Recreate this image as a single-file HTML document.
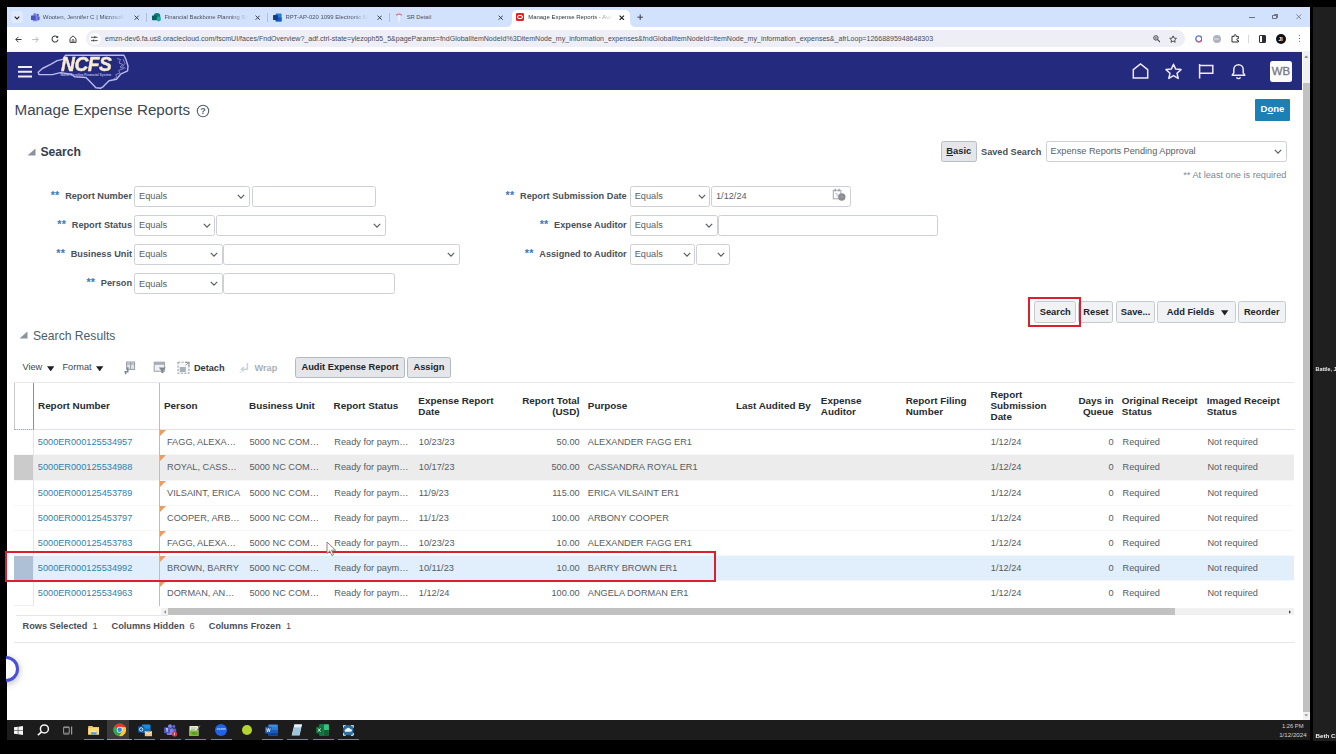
<!DOCTYPE html>
<html><head><meta charset="utf-8"><title>Manage Expense Reports</title>
<style>
*{box-sizing:border-box;margin:0;padding:0}
html,body{width:1336px;height:754px;overflow:hidden;background:#000;font-family:"Liberation Sans",sans-serif;}
.a{position:absolute}
.t{white-space:nowrap}
u{text-decoration-thickness:.8px;text-underline-offset:1px}
</style></head><body><div id="root" class="a" style="left:0;top:0;width:1336px;height:754px;filter:blur(.45px)">
<!-- window base -->
<div class="a" style="left:6.5px;top:6.6px;width:1303.4px;height:713.2px;background:#fff"></div>
<!-- right dark panel -->
<div class="a" style="left:1312.8px;top:6.6px;width:23.2px;height:734.2px;background:#1f1f1f"></div>
<!-- tab strip -->
<div class="a" style="left:6.5px;top:6.6px;width:1303.4px;height:20.6px;background:#d3e2fc"></div>
<!-- active tab -->
<div class="a" style="left:512px;top:9.5px;width:118px;height:18px;background:#fff;border-radius:5px 5px 0 0"></div>
<!-- address bar -->
<div class="a" style="left:86px;top:30.2px;width:1098.6px;height:17px;border-radius:8.5px;background:#eeeff6"></div>
<!-- orange line -->
<div class="a" style="left:6.5px;top:49.6px;width:1295.8px;height:3px;background:linear-gradient(#fff,#fbe3c6)"></div>
<!-- navy header -->
<div class="a" style="left:6.5px;top:52.2px;width:1295.8px;height:37.8px;background:#242a7d"></div>
<!-- vertical scrollbar -->
<div class="a" style="left:1302.5px;top:50.6px;width:7.4px;height:669.2px;background:#f1f1f1"></div>
<div class="a" style="left:1302.5px;top:82.5px;width:7.4px;height:629px;background:#c1c1c1"></div>
<!-- taskbar -->
<div class="a" style="left:6.5px;top:719.7px;width:1303.4px;height:20.3px;background:#1c1c1c"></div>
<!-- tab search chevron -->
<div class="a" style="left:10.7px;top:10.8px;width:12.4px;height:12.6px;border-radius:3.5px;background:#e1eafd"></div>
<svg class="a" style="left:13.8px;top:15.6px" width="6" height="4" viewBox="0 0 6 4"><path d="M0.7 0.7L3 3l2.3-2.3" fill="none" stroke="#1f1f1f" stroke-width="1.1"/></svg>
<!-- tab1 teams -->
<svg class="a" style="left:31px;top:13px" width="9" height="9" viewBox="0 0 9 9"><circle cx="6.6" cy="2.1" r="1.3" fill="#5b5fc7"/><circle cx="3.8" cy="1.7" r="1.6" fill="#7b83eb"/><rect x="4.6" y="3.3" width="4" height="4" rx="1" fill="#5b5fc7"/><rect x="1.6" y="3.3" width="5" height="5" rx="1" fill="#7b83eb"/><rect x="0" y="2.5" width="4.6" height="4.6" rx=".6" fill="#4b53bc"/></svg>
<div class="a t" style="left:42.8px;top:12px;height:11px;line-height:11px;width:82px;overflow:hidden;font-size:6.05px;color:#4a5060;-webkit-mask-image:linear-gradient(90deg,#000 80%,transparent)">Wooten, Jennifer C | Microsoft</div>
<!-- tab2 sharepoint -->
<svg class="a" style="left:151.6px;top:13px" width="9.4" height="9" viewBox="0 0 9.4 9"><circle cx="5" cy="3.4" r="3.3" fill="#0b7d74"/><circle cx="6.6" cy="6" r="2.4" fill="#1fa89b"/><rect x="0" y="2.4" width="4.8" height="4.8" rx=".6" fill="#03635c"/></svg>
<div class="a t" style="left:164.5px;top:12px;height:11px;line-height:11px;width:83px;overflow:hidden;font-size:5.85px;color:#4a5060;-webkit-mask-image:linear-gradient(90deg,#000 80%,transparent)">Financial Backbone Planning Sr</div>
<!-- tab3 word -->
<svg class="a" style="left:273.2px;top:13px" width="8.6" height="9" viewBox="0 0 8.6 9"><rect x="2.6" y="0.6" width="6" height="7.8" rx=".7" fill="#2b7cd3"/><rect x="2.6" y="4.4" width="6" height="4" fill="#185abd"/><rect x="0" y="2" width="5" height="5" rx=".6" fill="#103f91"/></svg>
<div class="a t" style="left:285.6px;top:12px;height:11px;line-height:11px;width:82.6px;overflow:hidden;font-size:5.93px;color:#4a5060;-webkit-mask-image:linear-gradient(90deg,#000 80%,transparent)">RPT-AP-020 1099 Electronic M</div>
<!-- tab4 icon -->
<svg class="a" style="left:394.6px;top:12.6px" width="8" height="10" viewBox="0 0 8 10"><path d="M1 2.2Q4 0 7 2.2" fill="none" stroke="#e2737b" stroke-width="1.1"/><path d="M4 2.2V7.6" stroke="#f2f5fb" stroke-width="1.6"/><circle cx="4" cy="8.6" r=".8" fill="#eef1f8"/></svg>
<div class="a t" style="left:406.7px;top:12px;height:11px;line-height:11px;font-size:5.8px;color:#4a5060">SR Detail</div>
<!-- separators -->
<div class="a" style="left:146.2px;top:13px;width:.8px;height:9px;background:#b3c0d9"></div>
<div class="a" style="left:266.8px;top:13px;width:.8px;height:9px;background:#b3c0d9"></div>
<div class="a" style="left:388.6px;top:13px;width:.8px;height:9px;background:#b3c0d9"></div>
<!-- closes -->
<svg class="a" style="left:134.2px;top:14.8px" width="5.4" height="5.4" viewBox="0 0 5.4 5.4"><path d="M.6 .6l4.2 4.2M4.8 .6L.6 4.8" stroke="#3a3f49" stroke-width="1"/></svg>
<svg class="a" style="left:255.1px;top:14.8px" width="5.4" height="5.4" viewBox="0 0 5.4 5.4"><path d="M.6 .6l4.2 4.2M4.8 .6L.6 4.8" stroke="#3a3f49" stroke-width="1"/></svg>
<svg class="a" style="left:376.7px;top:14.8px" width="5.4" height="5.4" viewBox="0 0 5.4 5.4"><path d="M.6 .6l4.2 4.2M4.8 .6L.6 4.8" stroke="#3a3f49" stroke-width="1"/></svg>
<svg class="a" style="left:498px;top:14.8px" width="5.4" height="5.4" viewBox="0 0 5.4 5.4"><path d="M.6 .6l4.2 4.2M4.8 .6L.6 4.8" stroke="#3a3f49" stroke-width="1"/></svg>
<!-- active tab curves -->
<svg class="a" style="left:506px;top:21.2px" width="6" height="6" viewBox="0 0 6 6"><path d="M6 0V6H0Q6 6 6 0Z" fill="#fff"/></svg>
<svg class="a" style="left:630px;top:21.2px" width="6" height="6" viewBox="0 0 6 6"><path d="M0 0V6H6Q0 6 0 0Z" fill="#fff"/></svg>
<!-- active tab content -->
<div class="a" style="left:516px;top:13.3px;width:7.8px;height:7.8px;border-radius:1.2px;background:#e0262c"></div>
<div class="a" style="left:517px;top:15px;width:5.8px;height:4.4px;border-radius:2.2px;border:1px solid #fff"></div>
<div class="a t" style="left:528.2px;top:12px;height:11px;line-height:11px;width:85px;overflow:hidden;font-size:5.98px;color:#30343c;-webkit-mask-image:linear-gradient(90deg,#000 78%,transparent)">Manage Expense Reports - Aud</div>
<svg class="a" style="left:619px;top:14.7px" width="5.6" height="5.6" viewBox="0 0 5.6 5.6"><path d="M.6 .6l4.4 4.4M5 .6L.6 5" stroke="#1c1e22" stroke-width="1.1"/></svg>
<svg class="a" style="left:637px;top:14.2px" width="6.4" height="6.4" viewBox="0 0 6.4 6.4"><path d="M3.2 .4v5.6M.4 3.2h5.6" stroke="#3a4150" stroke-width="1"/></svg>
<!-- window controls -->
<div class="a" style="left:1249.2px;top:16.6px;width:5.6px;height:.9px;background:#6b7282"></div>
<div class="a" style="left:1272.4px;top:15px;width:4.2px;height:4.2px;border:.8px solid #6b7282;border-radius:.8px"></div>
<div class="a" style="left:1273.6px;top:14px;width:4.2px;height:4.2px;border:.8px solid #6b7282;border-left:0;border-bottom:0;border-radius:.8px"></div>
<svg class="a" style="left:1296px;top:14.3px" width="5.6" height="5.6" viewBox="0 0 5.6 5.6"><path d="M.4 .4l4.8 4.8M5.2 .4L.4 5.2" stroke="#6b7282" stroke-width=".8"/></svg>
<!-- nav buttons -->
<svg class="a" style="left:15px;top:35.6px" width="7" height="7" viewBox="0 0 7 7"><path d="M6.6 3.5H1M3.4 .8L.8 3.5l2.6 2.7" fill="none" stroke="#3c4043" stroke-width="1"/></svg>
<svg class="a" style="left:32.4px;top:35.6px" width="7" height="7" viewBox="0 0 7 7"><path d="M.4 3.5H6M3.6 .8l2.6 2.7-2.6 2.7" fill="none" stroke="#b7bbc2" stroke-width="1"/></svg>
<svg class="a" style="left:50.8px;top:35px" width="8" height="8" viewBox="0 0 8 8"><path d="M6.6 2.4A3 3 0 1 0 7 4.6" fill="none" stroke="#3c4043" stroke-width="1.05"/><path d="M7.2 .6v2.4H4.8z" fill="#3c4043"/></svg>
<svg class="a" style="left:68.8px;top:35px" width="8" height="8" viewBox="0 0 8 8"><path d="M1 3.6L4 .9l3 2.7V7.4H1z" fill="none" stroke="#3c4043" stroke-width="1"/><path d="M3.2 7.4V5.2a.8 .8 0 0 1 1.6 0v2.2" fill="none" stroke="#3c4043" stroke-width=".8"/></svg>
<!-- tune icon -->
<div class="a" style="left:88.6px;top:32.6px;width:12.2px;height:12.2px;border-radius:50%;background:#fbfbfe"></div>
<svg class="a" style="left:91.4px;top:36.2px" width="6.6" height="6" viewBox="0 0 6.6 6"><path d="M0 1.3h3M4.8 1.3h1.8M0 4.6h1.6M3.6 4.6h3" stroke="#3c4043" stroke-width=".9"/><circle cx="3.9" cy="1.3" r="1" fill="#3c4043"/><circle cx="2.6" cy="4.6" r="1" fill="#3c4043"/></svg>
<div class="a t" style="left:105px;top:33.4px;height:11px;line-height:11px;font-size:7.06px;color:#474c55">emzn-dev6.fa.us8.oraclecloud.com/fscmUI/faces/FndOverview?_adf.ctrl-state=ylezoph55_5&amp;pageParams=fndGlobalItemNodeId%3DitemNode_my_information_expenses&amp;fndGlobalItemNodeId=itemNode_my_information_expenses&amp;_afrLoop=12668895948648303</div>
<!-- omnibox right icons -->
<svg class="a" style="left:1152.8px;top:35.2px" width="7.6" height="7.6" viewBox="0 0 7.6 7.6"><circle cx="2.9" cy="2.9" r="2.2" fill="none" stroke="#3c4043" stroke-width="1"/><path d="M4.6 4.6l2.6 2.6" stroke="#3c4043" stroke-width="1.1"/><path d="M1.9 2.9h2M2.9 1.9v2" stroke="#3c4043" stroke-width=".6"/></svg>
<svg class="a" style="left:1168.8px;top:34.8px" width="8.2" height="8" viewBox="0 0 8.2 8"><path d="M4.1 .9l1 2.2 2.4 .25-1.8 1.6 .5 2.35L4.1 6.1 2 7.3l.5-2.35L.7 3.35l2.4-.25z" fill="none" stroke="#3c4043" stroke-width=".9" stroke-linejoin="round"/></svg>
<!-- extensions -->
<svg class="a" style="left:1194.6px;top:35px" width="7.6" height="7.6" viewBox="0 0 7.6 7.6"><circle cx="3.8" cy="3.8" r="3" fill="#fff" stroke="#5a6ee6" stroke-width="1.3"/><path d="M1.6 5.9A3 3 0 0 0 6.2 5.6" fill="none" stroke="#e85a6b" stroke-width="1.3"/></svg>
<div class="a" style="left:1212.6px;top:34.6px;width:8.4px;height:8.4px;border-radius:50%;background:#b0b3bd"></div>
<div class="a" style="left:1214.4px;top:38.2px;width:4.8px;height:1.4px;background:#c9cbd3"></div>
<svg class="a" style="left:1231px;top:34.4px" width="8.6" height="8.8" viewBox="0 0 8.6 8.8"><path d="M1 2.4h2.2V1.6a1 1 0 0 1 2 0v.8h2.2v2.2h-.6a1 1 0 0 0 0 2h.6V8H1z" fill="none" stroke="#2b2e33" stroke-width="1" stroke-linejoin="round"/></svg>
<div class="a" style="left:1248px;top:34.6px;width:.8px;height:8.6px;background:#d6d9e0"></div>
<div class="a" style="left:1258.6px;top:35.2px;width:7.8px;height:7.4px;border:1px solid #2b2e33;border-radius:1px;background:linear-gradient(90deg,#fff 50%,#2b2e33 50%)"></div>
<div class="a t" style="left:1275.6px;top:33.8px;width:10.2px;height:10.2px;border-radius:50%;background:#101116;color:#fff;font-size:5px;font-weight:700;text-align:center;line-height:10.2px">JI</div>
<div class="a" style="left:1298.6px;top:35.2px;width:1.3px;height:1.3px;background:#3c4043;border-radius:50%;box-shadow:0 2.9px 0 #3c4043,0 5.8px 0 #3c4043"></div>
<!-- scroll arrows -->
<svg class="a" style="left:1304px;top:54.6px" width="4.4" height="3" viewBox="0 0 4.4 3"><path d="M.2 2.8L2.2 .4l2 2.4z" fill="#7a7a7a"/></svg>
<svg class="a" style="left:1304px;top:714px" width="4.4" height="3" viewBox="0 0 4.4 3"><path d="M.2 .2L2.2 2.6l2-2.4z" fill="#9a9a9a"/></svg>
<!-- navy header content -->
<div class="a" style="left:17.8px;top:65.9px;width:14.2px;height:1.9px;background:#f0eef4;box-shadow:0 4.75px 0 #f0eef4,0 9.5px 0 #f0eef4"></div>
<svg class="a" style="left:37px;top:54px" width="93" height="36" viewBox="0 0 93 36"><path d="M1.200 18.200 L5.400 14.500 L13.600 10.400 L20.200 6.600 L25.900 5.400 L28.400 1.300 L86.900 1.300 L88.900 5.400 L91 12 L90.600 16.900 L83.600 20.200 L79.500 25.200 L72 26.800 L66.300 32.600 L63.800 34.200 L58.900 33.800 L53.900 28.500 L49 23.500 L37.500 22.700 L34.200 20.200 L23.500 18.600 L15.200 20.600 L2 20.600 Z" fill="none" stroke="#bcb9ee" stroke-width="1.400" stroke-linejoin="round"/><path d="M80 4.500l3.500 1-1.500 3.500 4 1.500-3 2.500 3.500 1.500-5 2 1.500 2.500-4 1.500 .5 3-3 1.500M86 5l2 4.500-2.500 3 3 2" fill="none" stroke="#9c99d8" stroke-width=".8"/></svg>
<div class="a t" style="left:60.500px;top:72.600px;height:4px;line-height:4px;font-size:3.300px;font-weight:700;color:#b9b7ec;letter-spacing:0">North Carolina Financial System</div>
<div class="a t" style="left:61.400px;top:53.200px;height:22px;line-height:22px;font-size:21px;font-weight:700;font-style:italic;color:#f7ecd9;letter-spacing:-.5px;-webkit-text-stroke:.45px #f7ecd9;text-shadow:1px 1px 0 #2e2a55;transform:scaleX(.915);transform-origin:0 0">NCFS</div>
<!-- header icons -->
<svg class="a" style="left:1130.5px;top:62px" width="19" height="18" viewBox="0 0 19 18"><path d="M2.3 16.1V7.6L9.5 1.9l7.2 5.7v8.5z" fill="none" stroke="#eeeaf2" stroke-width="1.5" stroke-linejoin="miter"/></svg>
<svg class="a" style="left:1163.5px;top:62px" width="19" height="18" viewBox="0 0 19 18"><path d="M9.5 2.2l2.2 4.9 5.3 .5-4 3.6 1.2 5.2-4.7-2.8-4.7 2.8 1.2-5.2-4-3.6 5.3-.5z" fill="none" stroke="#eeeaf2" stroke-width="1.5" stroke-linejoin="round"/></svg>
<svg class="a" style="left:1196.5px;top:62px" width="19" height="18" viewBox="0 0 19 18"><path d="M2.6 2v14.6M2.6 3.4h13.2v7.8H2.6" fill="none" stroke="#eeeaf2" stroke-width="1.5"/></svg>
<svg class="a" style="left:1229px;top:62px" width="19" height="18" viewBox="0 0 19 18"><path d="M3.2 13.2h12.6l-1.6-2.4V7.4a4.7 4.7 0 0 0-9.4 0v3.4z" fill="none" stroke="#eeeaf2" stroke-width="1.5" stroke-linejoin="round"/><path d="M7.6 15.2a2 2 0 0 0 3.8 0" fill="none" stroke="#eeeaf2" stroke-width="1.4"/></svg>
<div class="a t" style="left:1270px;top:60.5px;width:22px;height:21.5px;border-radius:2.5px;background:#fcfcfc;color:#77777c;font-size:11.4px;-webkit-text-stroke:.3px #77777c;text-align:center;line-height:21.5px">WB</div>
<!-- taskbar -->
<div class="a" style="left:107px;top:719.7px;width:22.4px;height:20.3px;background:#3b3b3b"></div>
<svg class="a" style="left:14.2px;top:726px" width="9" height="9" viewBox="0 0 9 9"><path d="M0 1.3l3.8-.55v3.5H0zM4.3 .7L9 0v4.25H4.3zM0 4.75h3.8v3.5L0 7.7zM4.3 4.75H9V9l-4.7-.7z" fill="#f4f4f4"/></svg>
<svg class="a" style="left:36.8px;top:724.4px" width="13" height="12" viewBox="0 0 13 12"><circle cx="7.4" cy="4.9" r="4" fill="none" stroke="#f4f4f4" stroke-width="1.5"/><path d="M4.6 7.9L.9 11.2" stroke="#f4f4f4" stroke-width="1.7"/></svg>
<svg class="a" style="left:62.6px;top:726px" width="10" height="9" viewBox="0 0 10 9"><rect x=".6" y="1.6" width="5.6" height="5.6" fill="none" stroke="#9a9a9a" stroke-width="1"/><path d="M.6 .4h5.6M.6 8.6h5.6" stroke="#8a8a8a" stroke-width=".7"/><path d="M8.6 .4v8.2" stroke="#9a9a9a" stroke-width="1.2"/></svg>
<!-- explorer -->
<svg class="a" style="left:88px;top:725.4px" width="11.4" height="10" viewBox="0 0 11.4 10"><path d="M.2 1h4l1 1h6v7.6H.2z" fill="#f5c84a"/><rect x=".2" y="3" width="11" height="6.6" fill="#fbdc73"/><rect x="3" y="6" width="5.6" height="3.6" fill="#5b9bd5"/><rect x="3" y="6" width="5.6" height="1.2" fill="#e9e9d8"/></svg>
<!-- chrome -->
<svg class="a" style="left:112.6px;top:723.4px" width="13.4" height="13.4" viewBox="0 0 13.4 13.4"><circle cx="6.7" cy="6.7" r="6.4" fill="#e33b2e"/><path d="M6.7 6.7L1.2 3.5A6.4 6.4 0 0 0 6.1 13.1L9.4 8.3z" fill="#2da94f"/><path d="M6.7 6.7l2.8 1.6-3.4 4.8A6.4 6.4 0 0 0 12.5 3.9H7.2z" fill="#fcc934"/><circle cx="6.7" cy="6.7" r="3" fill="#f4f4f4"/><circle cx="6.7" cy="6.7" r="2.3" fill="#3f7fe6"/></svg>
<!-- outlook -->
<svg class="a" style="left:138px;top:724.4px" width="14.4" height="12.4" viewBox="0 0 14.4 12.4"><rect x="4" y=".4" width="8.4" height="8.6" rx=".8" fill="#1a8fe0"/><rect x="4" y="4.6" width="8.4" height="4.4" fill="#0f6cbd"/><rect x="0" y="2.2" width="6.4" height="6.4" rx=".8" fill="#0a5aa6"/><circle cx="3.2" cy="5.4" r="1.7" fill="none" stroke="#e8f1fa" stroke-width=".9"/><rect x="6.8" y="7.4" width="7.4" height="4.8" fill="#f0c58a"/><path d="M6.8 7.4l3.7 2.6 3.7-2.6" fill="none" stroke="#fff3dc" stroke-width=".8"/></svg>
<!-- teams -->
<svg class="a" style="left:163.6px;top:724px" width="14" height="13" viewBox="0 0 14 13"><circle cx="9.8" cy="2.4" r="1.6" fill="#5b5fc7"/><circle cx="6" cy="2.2" r="2" fill="#7b83eb"/><rect x="6.6" y="4.4" width="5.6" height="5.4" rx="1.2" fill="#5b5fc7"/><rect x="2.6" y="4.4" width="6.8" height="6.6" rx="1.2" fill="#7b83eb"/><rect x="0" y="3.2" width="6" height="6" rx=".7" fill="#4b53bc"/><path d="M1.8 4.8h2.4M3 4.8v3.2" stroke="#fff" stroke-width=".8"/><circle cx="10.6" cy="10" r="2.6" fill="#d9303f"/><rect x="10.2" y="8.6" width=".8" height="2.8" fill="#fbd9dc"/></svg>
<!-- notepad++ -->
<svg class="a" style="left:189px;top:724.6px" width="11.6" height="11.6" viewBox="0 0 11.6 11.6"><rect x=".4" y="1" width="9" height="10.2" rx=".8" fill="#e9f0d4"/><rect x=".4" y="5.4" width="9" height="5.8" fill="#7fb839"/><path d="M2 3h5.4M2 4.6h4" stroke="#9aa68a" stroke-width=".7"/><path d="M1.8 7h5.6l1 2.8H3.4z" fill="#5c9a28"/><path d="M11 .6L8 5.4" stroke="#8a7a46" stroke-width="1"/></svg>
<!-- zoom -->
<div class="a" style="left:214.8px;top:723.7px;width:12.7px;height:12.7px;border-radius:50%;background:#1e63ea"></div>
<div class="a t" style="left:214.8px;top:727.4px;width:12.7px;text-align:center;font-size:3.6px;line-height:5px;font-weight:700;color:#bcd2fb">zoom</div>
<!-- green circle -->
<div class="a" style="left:241.5px;top:724.9px;width:10.4px;height:10.4px;border-radius:50%;background:#b5d42f"></div>
<!-- word -->
<svg class="a" style="left:265.4px;top:724.4px" width="13" height="12" viewBox="0 0 13 12"><rect x="3.4" y=".4" width="9.4" height="11.2" rx=".9" fill="#3a8fe2"/><rect x="3.4" y="3.2" width="9.4" height="2.8" fill="#2b7cd3"/><rect x="3.4" y="6" width="9.4" height="2.8" fill="#185abd"/><rect x="3.4" y="8.8" width="9.4" height="2.8" fill="#103f91"/><rect x="0" y="2.8" width="6.6" height="6.6" rx=".8" fill="#1a5dbe"/><path d="M1.6 4.4l.9 3.4 .9-3.4 .9 3.4 .9-3.4" fill="none" stroke="#fff" stroke-width=".7"/></svg>
<!-- notepad -->
<svg class="a" style="left:291.4px;top:724.4px" width="11.6" height="12" viewBox="0 0 11.6 12"><path d="M3.4 .6h7.6L8.6 11.4H.6z" fill="#d8e6ee"/><path d="M3 3.4h7L8.4 11H1z" fill="#9cc5da"/><path d="M3.4 .6h7.6l-.4 1.6H3z" fill="#f2f5f7"/></svg>
<!-- excel -->
<svg class="a" style="left:316.4px;top:724.4px" width="13" height="12" viewBox="0 0 13 12"><rect x="3.4" y=".4" width="9.4" height="11.2" rx=".9" fill="#21a366"/><rect x="3.4" y=".4" width="4.7" height="5.6" fill="#107c41"/><rect x="8.1" y="6" width="4.7" height="5.6" fill="#185c37"/><rect x="3.4" y="6" width="4.7" height="5.6" fill="#107c41"/><rect x="8.1" y=".4" width="4.7" height="5.6" fill="#33c481"/><rect x="0" y="2.8" width="6.6" height="6.6" rx=".8" fill="#0e6e3a"/><path d="M2 4.4l2.6 3.4M4.6 4.4L2 7.8" stroke="#fff" stroke-width=".8"/></svg>
<!-- snip -->
<svg class="a" style="left:343.4px;top:725px" width="10.6" height="10.6" viewBox="0 0 10.6 10.6"><rect x=".3" y=".3" width="10" height="10" rx="1" fill="#2a6fa3"/><path d="M.3 2.6V.3h2.3M8 .3h2.3v2.3M10.300 8v2.3H8M2.600 10.300H.3V8" fill="none" stroke="#eef5fa" stroke-width="1"/><path d="M2.400 6.800a1.400 1.400 0 0 1 .7-2.600 2.100 2.100 0 0 1 4-.1 1.400 1.400 0 0 1 .9 2.700z" fill="#f3f8fb"/></svg>
<!-- underlines -->
<div class="a" style="left:84px;top:739px;width:20.4px;height:1.3px;background:#6f8796"></div>
<div class="a" style="left:107px;top:739px;width:24.6px;height:1.3px;background:#8ea5b4"></div>
<div class="a" style="left:134.4px;top:739px;width:20.8px;height:1.3px;background:#6f8796"></div>
<div class="a" style="left:160px;top:739px;width:21px;height:1.3px;background:#6f8796"></div>
<div class="a" style="left:185.4px;top:739px;width:21px;height:1.3px;background:#6f8796"></div>
<div class="a" style="left:211px;top:739px;width:21px;height:1.3px;background:#6f8796"></div>
<div class="a" style="left:261.8px;top:739px;width:21px;height:1.3px;background:#6f8796"></div>
<div class="a" style="left:287px;top:739px;width:21px;height:1.3px;background:#6f8796"></div>
<div class="a" style="left:312.6px;top:739px;width:21px;height:1.3px;background:#6f8796"></div>
<div class="a" style="left:338.2px;top:739px;width:21px;height:1.3px;background:#6f8796"></div>
<!-- clock -->
<div class="a t" style="right:32.5px;top:721.6px;height:8px;line-height:8px;font-size:5.8px;color:#d2d2d2">1:26 PM</div>
<div class="a t" style="right:29.3px;top:731px;height:8px;line-height:8px;font-size:6.2px;color:#d2d2d2">1/12/2024</div>
<!-- right panel labels -->
<div class="a t" style="left:1315.5px;top:364.5px;height:8px;line-height:8px;font-size:5.4px;font-weight:700;color:#e9e9e9">Battle, J</div>
<div class="a t" style="left:1315.5px;top:732.4px;height:8px;line-height:8px;font-size:6.2px;font-weight:700;color:#f1f1f1">Beth Cr</div>

<div class="a t" style="left:14.5px;top:102.5px;height:14px;line-height:14px;font-size:15.2px;font-weight:400;color:#3c4856;">Manage Expense Reports</div>
<svg class="a" style="left:196px;top:104px" width="14" height="14" viewBox="0 0 14 14"><circle cx="7" cy="7" r="5.7" fill="none" stroke="#55606c" stroke-width="1.1"/><text x="7" y="10.2" font-size="9" font-weight="700" text-anchor="middle" fill="#55606c" font-family="Liberation Sans">?</text></svg>
<div class="a" style="left:1254.5px;top:99.3px;width:35.9px;height:21.7px;background:#1a80b6;border-radius:1px;text-align:center;line-height:20px;font-size:9.5px;font-weight:700;color:#fff">D<u>o</u>ne</div>
<svg class="a" style="left:27px;top:147.5px" width="9" height="8" viewBox="0 0 9 8"><path d="M8.5 0.5 V7.5 H0.5 Z" fill="#8a939c"/></svg>
<div class="a t" style="left:40.4px;top:144.7px;height:14px;line-height:14px;font-size:12.2px;font-weight:700;color:#33414f;">Search</div>
<div class="a" style="left:941.0px;top:141.39999999999998px;width:35.5px;height:20.6px;border:1.2px solid #c6cace;border-radius:2.5px;background:#f1f2f4;text-align:center;line-height:19.0px;font-size:9.299999999999999px;font-weight:700;color:#20252b;white-space:nowrap;background:#e4e6e9;border-color:#b9bec4"><u>B</u>asic</div>
<div class="a t" style="left:981px;top:144.6px;height:14px;line-height:14px;font-size:9.2px;font-weight:700;color:#4a5159;">Saved Search</div>
<div class="a" style="left:1045.9px;top:141.0px;width:241.1px;height:21.4px;border:1.3px solid #cdd1d6;border-radius:2.5px;background:#fff"><div class="a t" style="left:3.7px;top:0;height:100%;line-height:19.8px;font-size:9.2px;color:#5a6168">Expense Reports Pending Approval</div><svg class="a" style="right:3.8px;top:50%;margin-top:-2.3px" width="8" height="5.4" viewBox="0 0 8 5.4"><path d="M0.800 0.900 L4 4.100 L7.200 0.900" fill="none" stroke="#5a6067" stroke-width="1.250"/></svg></div>
<div class="a t" style="right:49.59999999999991px;top:167.7px;height:14px;line-height:14px;font-size:9.2px;font-weight:400;color:#7b8792;">** At least one is required</div>
<div class="a t" style="right:1204.0px;top:189.2px;height:14px;line-height:14px;font-size:9.2px;font-weight:700;color:#4a5159;"><span style="color:#3d78b6;font-weight:700;font-size:10.8px;line-height:0;margin-right:5.6px;letter-spacing:.2px;position:relative;top:-.4px">**</span>Report Number</div>
<div class="a t" style="right:1204.0px;top:218.0px;height:14px;line-height:14px;font-size:9.2px;font-weight:700;color:#4a5159;"><span style="color:#3d78b6;font-weight:700;font-size:10.8px;line-height:0;margin-right:5.6px;letter-spacing:.2px;position:relative;top:-.4px">**</span>Report Status</div>
<div class="a t" style="right:1204.0px;top:247.3px;height:14px;line-height:14px;font-size:9.2px;font-weight:700;color:#4a5159;"><span style="color:#3d78b6;font-weight:700;font-size:10.8px;line-height:0;margin-right:5.6px;letter-spacing:.2px;position:relative;top:-.4px">**</span>Business Unit</div>
<div class="a t" style="right:1204.0px;top:276.4px;height:14px;line-height:14px;font-size:9.2px;font-weight:700;color:#4a5159;"><span style="color:#3d78b6;font-weight:700;font-size:10.8px;line-height:0;margin-right:5.6px;letter-spacing:.2px;position:relative;top:-.4px">**</span>Person</div>
<div class="a" style="left:134.39999999999998px;top:185.6px;width:115.8px;height:21.5px;border:1.3px solid #cdd1d6;border-radius:2.5px;background:#fff"><div class="a t" style="left:3.7px;top:0;height:100%;line-height:19.9px;font-size:9.2px;color:#5a6168">Equals</div><svg class="a" style="right:3.8px;top:50%;margin-top:-2.3px" width="8" height="5.4" viewBox="0 0 8 5.4"><path d="M0.800 0.900 L4 4.100 L7.200 0.900" fill="none" stroke="#5a6067" stroke-width="1.250"/></svg></div>
<div class="a" style="left:251.7px;top:185.6px;width:124.7px;height:21.5px;border:1.3px solid #cdd1d6;border-radius:2.5px;background:#fff"></div>
<div class="a" style="left:134.39999999999998px;top:214.6px;width:81.0px;height:21.4px;border:1.3px solid #cdd1d6;border-radius:2.5px;background:#fff"><div class="a t" style="left:3.7px;top:0;height:100%;line-height:19.8px;font-size:9.2px;color:#5a6168">Equals</div><svg class="a" style="right:3.8px;top:50%;margin-top:-2.3px" width="8" height="5.4" viewBox="0 0 8 5.4"><path d="M0.800 0.900 L4 4.100 L7.200 0.900" fill="none" stroke="#5a6067" stroke-width="1.250"/></svg></div>
<div class="a" style="left:216.0px;top:214.6px;width:170.2px;height:21.4px;border:1.3px solid #cdd1d6;border-radius:2.5px;background:#fff"><svg class="a" style="right:3.8px;top:50%;margin-top:-2.3px" width="8" height="5.4" viewBox="0 0 8 5.4"><path d="M0.800 0.900 L4 4.100 L7.200 0.900" fill="none" stroke="#5a6067" stroke-width="1.250"/></svg></div>
<div class="a" style="left:134.39999999999998px;top:243.6px;width:88.4px;height:21.5px;border:1.3px solid #cdd1d6;border-radius:2.5px;background:#fff"><div class="a t" style="left:3.7px;top:0;height:100%;line-height:19.9px;font-size:9.2px;color:#5a6168">Equals</div><svg class="a" style="right:3.8px;top:50%;margin-top:-2.3px" width="8" height="5.4" viewBox="0 0 8 5.4"><path d="M0.800 0.900 L4 4.100 L7.200 0.900" fill="none" stroke="#5a6067" stroke-width="1.250"/></svg></div>
<div class="a" style="left:223.39999999999998px;top:243.6px;width:236.5px;height:21.5px;border:1.3px solid #cdd1d6;border-radius:2.5px;background:#fff"><svg class="a" style="right:3.8px;top:50%;margin-top:-2.3px" width="8" height="5.4" viewBox="0 0 8 5.4"><path d="M0.800 0.900 L4 4.100 L7.200 0.900" fill="none" stroke="#5a6067" stroke-width="1.250"/></svg></div>
<div class="a" style="left:134.39999999999998px;top:272.8px;width:88.4px;height:21.6px;border:1.3px solid #cdd1d6;border-radius:2.5px;background:#fff"><div class="a t" style="left:3.7px;top:0;height:100%;line-height:20.0px;font-size:9.2px;color:#5a6168">Equals</div><svg class="a" style="right:3.8px;top:50%;margin-top:-2.3px" width="8" height="5.4" viewBox="0 0 8 5.4"><path d="M0.800 0.900 L4 4.100 L7.200 0.900" fill="none" stroke="#5a6067" stroke-width="1.250"/></svg></div>
<div class="a" style="left:223.39999999999998px;top:272.8px;width:171.8px;height:21.6px;border:1.3px solid #cdd1d6;border-radius:2.5px;background:#fff"></div>
<div class="a t" style="right:709.3000000000001px;top:189.2px;height:14px;line-height:14px;font-size:9.2px;font-weight:700;color:#4a5159;"><span style="color:#3d78b6;font-weight:700;font-size:10.8px;line-height:0;margin-right:5.6px;letter-spacing:.2px;position:relative;top:-.4px">**</span>Report Submission Date</div>
<div class="a t" style="right:709.3000000000001px;top:218.0px;height:14px;line-height:14px;font-size:9.2px;font-weight:700;color:#4a5159;"><span style="color:#3d78b6;font-weight:700;font-size:10.8px;line-height:0;margin-right:5.6px;letter-spacing:.2px;position:relative;top:-.4px">**</span>Expense Auditor</div>
<div class="a t" style="right:709.3000000000001px;top:247.3px;height:14px;line-height:14px;font-size:9.2px;font-weight:700;color:#4a5159;"><span style="color:#3d78b6;font-weight:700;font-size:10.8px;line-height:0;margin-right:5.6px;letter-spacing:.2px;position:relative;top:-.4px">**</span>Assigned to Auditor</div>
<div class="a" style="left:630.0px;top:185.6px;width:80.3px;height:21.5px;border:1.3px solid #cdd1d6;border-radius:2.5px;background:#fff"><div class="a t" style="left:3.7px;top:0;height:100%;line-height:19.9px;font-size:9.2px;color:#5a6168">Equals</div><svg class="a" style="right:3.8px;top:50%;margin-top:-2.3px" width="8" height="5.4" viewBox="0 0 8 5.4"><path d="M0.800 0.900 L4 4.100 L7.200 0.900" fill="none" stroke="#5a6067" stroke-width="1.250"/></svg></div>
<div class="a" style="left:711.3000000000001px;top:185.6px;width:139.3px;height:21.5px;border:1.3px solid #cdd1d6;border-radius:2.5px;background:#fff"><div class="a t" style="left:3.7px;top:0;height:100%;line-height:19.9px;font-size:9.2px;color:#5a6168">1/12/24</div></div>
<div class="a" style="left:630.0px;top:214.6px;width:87.6px;height:21.4px;border:1.3px solid #cdd1d6;border-radius:2.5px;background:#fff"><div class="a t" style="left:3.7px;top:0;height:100%;line-height:19.8px;font-size:9.2px;color:#5a6168">Equals</div><svg class="a" style="right:3.8px;top:50%;margin-top:-2.3px" width="8" height="5.4" viewBox="0 0 8 5.4"><path d="M0.800 0.900 L4 4.100 L7.200 0.900" fill="none" stroke="#5a6067" stroke-width="1.250"/></svg></div>
<div class="a" style="left:718.2px;top:214.6px;width:219.4px;height:21.4px;border:1.3px solid #cdd1d6;border-radius:2.5px;background:#fff"></div>
<div class="a" style="left:630.0px;top:243.6px;width:65.3px;height:21.5px;border:1.3px solid #cdd1d6;border-radius:2.5px;background:#fff"><div class="a t" style="left:3.7px;top:0;height:100%;line-height:19.9px;font-size:9.2px;color:#5a6168">Equals</div><svg class="a" style="right:3.8px;top:50%;margin-top:-2.3px" width="8" height="5.4" viewBox="0 0 8 5.4"><path d="M0.800 0.900 L4 4.100 L7.200 0.900" fill="none" stroke="#5a6067" stroke-width="1.250"/></svg></div>
<div class="a" style="left:696.3000000000001px;top:243.6px;width:33.8px;height:21.5px;border:1.3px solid #cdd1d6;border-radius:2.5px;background:#fff"><svg class="a" style="right:3.8px;top:50%;margin-top:-2.3px" width="8" height="5.4" viewBox="0 0 8 5.4"><path d="M0.800 0.900 L4 4.100 L7.200 0.900" fill="none" stroke="#5a6067" stroke-width="1.250"/></svg></div>
<svg class="a" style="left:831.500px;top:188px" width="15" height="14" viewBox="0 0 15 14"><rect x="1.300" y="2.400" width="7.600" height="8.400" fill="#fbfbfc" stroke="#a9aeb3" stroke-width="1.100"/><path d="M3.200 .8v2.600M7 .8v2.600" stroke="#9a9fa5" stroke-width="1.300"/><path d="M3.400 5.600h1.800v3.200" fill="none" stroke="#b9bdc2" stroke-width=".9"/><circle cx="9.800" cy="9" r="3.700" fill="#8a8d91"/><path d="M8.600 8.200l2.400 1.400" stroke="#a9acb0" stroke-width="1"/></svg>
<div class="a" style="left:1034.3999999999999px;top:301.2px;width:41.7px;height:21.6px;border:1.2px solid #c6cace;border-radius:2.5px;background:#f1f2f4;text-align:center;line-height:20.0px;font-size:9.299999999999999px;font-weight:700;color:#20252b;white-space:nowrap;">Search</div>
<div class="a" style="left:1078.3999999999999px;top:301.2px;width:35.1px;height:21.6px;border:1.2px solid #c6cace;border-radius:2.5px;background:#f1f2f4;text-align:center;line-height:20.0px;font-size:9.299999999999999px;font-weight:700;color:#20252b;white-space:nowrap;">Reset</div>
<div class="a" style="left:1115.6px;top:301.2px;width:39.9px;height:21.6px;border:1.2px solid #c6cace;border-radius:2.5px;background:#f1f2f4;text-align:center;line-height:20.0px;font-size:9.299999999999999px;font-weight:700;color:#20252b;white-space:nowrap;">Save...</div>
<div class="a" style="left:1157.3999999999999px;top:301.2px;width:78.3px;height:21.6px;border:1.2px solid #c6cace;border-radius:2.5px;background:#f1f2f4;text-align:center;line-height:20.0px;font-size:9.299999999999999px;font-weight:700;color:#20252b;white-space:nowrap;">&nbsp;Add Fields&nbsp;&nbsp;<svg style="margin-left:2px;position:relative;top:.4px" width="7.400" height="5.400" viewBox="0 0 7.400 5.400"><path d="M0 .2H7.400L3.700 5.400Z" fill="#1d2126"/></svg></div>
<div class="a" style="left:1237.6px;top:301.2px;width:48.3px;height:21.6px;border:1.2px solid #c6cace;border-radius:2.5px;background:#f1f2f4;text-align:center;line-height:20.0px;font-size:9.299999999999999px;font-weight:700;color:#20252b;white-space:nowrap;">Reorder</div>
<div class="a" style="left:1028.1px;top:296.8px;width:53.1px;height:30.4px;border:2.2px solid #dc1f2c"></div>
<svg class="a" style="left:18.8px;top:331.3px" width="9" height="8" viewBox="0 0 9 8"><path d="M8.5 0.5 V7.5 H0.5 Z" fill="#8a939c"/></svg>
<div class="a t" style="left:33px;top:328.7px;height:14px;line-height:14px;font-size:12.15px;font-weight:400;color:#4f5c69;">Search Results</div>
<div class="a t" style="left:22.5px;top:360.3px;height:14px;line-height:14px;font-size:9.2px;font-weight:400;color:#3a4552;">View<svg style="margin-left:4.6px;position:relative;top:.6px" width="7.4" height="5.4" viewBox="0 0 7.4 5.4"><path d="M0 .2H7.4L3.7 5.400Z" fill="#1d2126"/></svg></div>
<div class="a t" style="left:62.5px;top:360.3px;height:14px;line-height:14px;font-size:9.2px;font-weight:400;color:#3a4552;">Format<svg style="margin-left:4.6px;position:relative;top:.6px" width="7.4" height="5.4" viewBox="0 0 7.4 5.4"><path d="M0 .2H7.4L3.7 5.400Z" fill="#1d2126"/></svg></div>
<div class="a t" style="left:193.9px;top:360.8px;height:14px;line-height:14px;font-size:9.2px;font-weight:700;color:#2f3842;">Detach</div>
<div class="a t" style="left:254.5px;top:360.8px;height:14px;line-height:14px;font-size:9.2px;font-weight:700;color:#a9b0b7;">Wrap</div>
<div class="a" style="left:295.3px;top:356.7px;width:109.4px;height:21.3px;border:1.2px solid #c6cace;border-radius:2.5px;background:#f1f2f4;text-align:center;line-height:19.7px;font-size:9.299999999999999px;font-weight:700;color:#20252b;white-space:nowrap;background:#e4e6e9;border-color:#b4b9bf">Audit Expense Report</div>
<div class="a" style="left:406.8px;top:356.7px;width:44.3px;height:21.3px;border:1.2px solid #c6cace;border-radius:2.5px;background:#f1f2f4;text-align:center;line-height:19.7px;font-size:9.299999999999999px;font-weight:700;color:#20252b;white-space:nowrap;background:#e4e6e9;border-color:#b4b9bf">Assign</div>
<svg class="a" style="left:122.5px;top:360.5px" width="13" height="14" viewBox="0 0 13 14"><rect x="3.6" y="1" width="8" height="7.4" fill="#e3e6e9" stroke="#969da4" stroke-width="1"/><path d="M3.6 3h8M7.6 1v7.400" stroke="#969da4" stroke-width="1"/><path d="M4.800 6.200v4.600H1.400M2.600 10.800v2.400" fill="none" stroke="#7f878f" stroke-width="1.5"/></svg>
<svg class="a" style="left:152.600px;top:360.600px" width="14" height="14" viewBox="0 0 14 14"><rect x="1.200" y="1.200" width="10.400" height="9" fill="#eef0f2" stroke="#9aa1a8" stroke-width="1"/><rect x="1.200" y="1.200" width="10.400" height="2.600" fill="#a5acb3"/><path d="M5.800 6.600h7L10.400 9.400v3.200l-2.200-1.200V9.400z" fill="#7f878f"/></svg>
<svg class="a" style="left:176.800px;top:360.600px" width="13" height="13" viewBox="0 0 13 13"><rect x="1" y="1.200" width="11" height="11" fill="#f6f7f8" stroke="#9aa1a8" stroke-width="1.100" stroke-dasharray="2.200 1.300"/><rect x="2.800" y="6" width="6" height="5" fill="#a9b0b7"/><path d="M8.200 1.300h3.700v3.700M11.600 1.600L8.800 4.400" fill="none" stroke="#8b939b" stroke-width="1"/></svg>
<svg class="a" style="left:239px;top:361.600px" width="11" height="11" viewBox="0 0 11 11"><path d="M8.400 1v6.200H2.600M4.800 5L2.400 7.200l2.400 2.200" fill="none" stroke="#cdd2d7" stroke-width="1.500"/><path d="M.6 10.200h2.400" stroke="#d5d9dd" stroke-width="1"/></svg>
<div class="a" style="left:14.2px;top:382.4px;width:1280.1px;height:1.0px;background:#e6e8eb"></div>
<div class="a" style="left:14.2px;top:429.3px;width:1280.1px;height:1.0px;background:#dfe3e7"></div>
<div class="a" style="left:14.2px;top:454.8px;width:1280.1px;height:25.2px;background:#ececec"></div>
<div class="a" style="left:14.2px;top:454.8px;width:19.5px;height:25.2px;background:#cbcbcb"></div>
<div class="a" style="left:14.2px;top:555.8px;width:1280.1px;height:24.7px;background:#e1eefb"></div>
<div class="a" style="left:14.2px;top:555.8px;width:19.5px;height:24.7px;background:#aec0d5"></div>
<div class="a" style="left:14.2px;top:454.3px;width:1280.1px;height:1.0px;background:#f6f7f8"></div>
<div class="a" style="left:14.2px;top:479.5px;width:1280.1px;height:1.0px;background:#f6f7f8"></div>
<div class="a" style="left:14.2px;top:504.8px;width:1280.1px;height:1.0px;background:#f6f7f8"></div>
<div class="a" style="left:14.2px;top:530.0px;width:1280.1px;height:1.0px;background:#f6f7f8"></div>
<div class="a" style="left:14.2px;top:555.3px;width:1280.1px;height:1.0px;background:#f6f7f8"></div>
<div class="a" style="left:14.2px;top:580.0px;width:1280.1px;height:1.0px;background:#f6f7f8"></div>
<div class="a" style="left:14.2px;top:605.2px;width:19.8px;height:1.0px;background:#eceef0"></div>
<div class="a" style="left:15.6px;top:614.9px;width:152.4px;height:1.0px;background:#e4e6e9"></div>
<div class="a" style="left:14.2px;top:383px;width:20.0px;height:47.2px;border-left:1px solid #c5c8cc;border-bottom:1px dotted #a2a7ad;border-right:1.1px solid #8b9096"></div>
<div class="a" style="left:33.2px;top:429.8px;width:1.0px;height:175.9px;background:#e3e6ea"></div>
<div class="a" style="left:159.2px;top:383px;width:1.2px;height:223.0px;background:#8ccfe0"></div>
<div class="a t" style="left:38px;top:401.3px;line-height:10.9px;font-size:9.9px;font-weight:700;color:#262b31">Report Number</div>
<div class="a t" style="left:164px;top:401.3px;line-height:10.9px;font-size:9.9px;font-weight:700;color:#262b31">Person</div>
<div class="a t" style="left:249px;top:401.3px;line-height:10.9px;font-size:9.9px;font-weight:700;color:#262b31">Business Unit</div>
<div class="a t" style="left:333.6px;top:401.3px;line-height:10.9px;font-size:9.9px;font-weight:700;color:#262b31">Report Status</div>
<div class="a t" style="left:418.3px;top:395.9px;line-height:10.9px;font-size:9.9px;font-weight:700;color:#262b31">Expense Report<br>Date</div>
<div class="a t" style="right:756.4px;text-align:right;top:395.9px;line-height:10.9px;font-size:9.9px;font-weight:700;color:#262b31">Report Total<br>(USD)</div>
<div class="a t" style="left:587.8px;top:401.3px;line-height:10.9px;font-size:9.9px;font-weight:700;color:#262b31">Purpose</div>
<div class="a t" style="left:736px;top:401.3px;line-height:10.9px;font-size:9.9px;font-weight:700;color:#262b31">Last Audited By</div>
<div class="a t" style="left:820.8px;top:395.9px;line-height:10.9px;font-size:9.9px;font-weight:700;color:#262b31">Expense<br>Auditor</div>
<div class="a t" style="left:905.7px;top:395.9px;line-height:10.9px;font-size:9.9px;font-weight:700;color:#262b31">Report Filing<br>Number</div>
<div class="a t" style="left:990.5px;top:390.4px;line-height:10.9px;font-size:9.9px;font-weight:700;color:#262b31">Report<br>Submission<br>Date</div>
<div class="a t" style="right:222.4000000000001px;text-align:right;top:395.9px;line-height:10.9px;font-size:9.9px;font-weight:700;color:#262b31">Days in<br>Queue</div>
<div class="a t" style="left:1121.8px;top:395.9px;line-height:10.9px;font-size:9.9px;font-weight:700;color:#262b31">Original Receipt<br>Status</div>
<div class="a t" style="left:1206.7px;top:395.9px;line-height:10.9px;font-size:9.9px;font-weight:700;color:#262b31">Imaged Receipt<br>Status</div>
<div class="a t" style="left:37.8px;top:435.3px;height:14px;line-height:14px;font-size:9.2px;font-weight:400;color:#2f7fb0;">5000ER000125534957</div>
<svg class="a" style="left:160.3px;top:430.4px" width="6" height="6" viewBox="0 0 6 6"><path d="M0 0H6L0 6Z" fill="#f09a5c"/></svg>
<div class="a t" style="left:167px;top:435.3px;height:14px;line-height:14px;font-size:9.2px;font-weight:400;color:#565c63;">FAGG, ALEXA&hellip;</div>
<div class="a t" style="left:249.5px;top:435.3px;height:14px;line-height:14px;font-size:9.2px;font-weight:400;color:#565c63;">5000 NC COM&hellip;</div>
<div class="a t" style="left:334.3px;top:435.3px;height:14px;line-height:14px;font-size:9.2px;font-weight:400;color:#565c63;">Ready for paym&hellip;</div>
<div class="a t" style="left:418.8px;top:435.3px;height:14px;line-height:14px;font-size:9.2px;font-weight:400;color:#565c63;">10/23/23</div>
<div class="a t" style="right:756.4px;top:435.3px;height:14px;line-height:14px;font-size:9.2px;font-weight:400;color:#565c63;">50.00</div>
<div class="a t" style="left:587.8px;top:435.3px;height:14px;line-height:14px;font-size:9.2px;font-weight:400;color:#565c63;">ALEXANDER FAGG ER1</div>
<div class="a t" style="left:990.8px;top:435.3px;height:14px;line-height:14px;font-size:9.2px;font-weight:400;color:#565c63;">1/12/24</div>
<div class="a t" style="right:222.4000000000001px;top:435.3px;height:14px;line-height:14px;font-size:9.2px;font-weight:400;color:#565c63;">0</div>
<div class="a t" style="left:1122.6px;top:435.3px;height:14px;line-height:14px;font-size:9.2px;font-weight:400;color:#565c63;">Required</div>
<div class="a t" style="left:1207.4px;top:435.3px;height:14px;line-height:14px;font-size:9.2px;font-weight:400;color:#565c63;">Not required</div>
<div class="a t" style="left:37.8px;top:460.4px;height:14px;line-height:14px;font-size:9.2px;font-weight:400;color:#2f7fb0;">5000ER000125534988</div>
<svg class="a" style="left:160.3px;top:455.4px" width="6" height="6" viewBox="0 0 6 6"><path d="M0 0H6L0 6Z" fill="#f09a5c"/></svg>
<div class="a t" style="left:167px;top:460.4px;height:14px;line-height:14px;font-size:9.2px;font-weight:400;color:#565c63;">ROYAL, CASS&hellip;</div>
<div class="a t" style="left:249.5px;top:460.4px;height:14px;line-height:14px;font-size:9.2px;font-weight:400;color:#565c63;">5000 NC COM&hellip;</div>
<div class="a t" style="left:334.3px;top:460.4px;height:14px;line-height:14px;font-size:9.2px;font-weight:400;color:#565c63;">Ready for paym&hellip;</div>
<div class="a t" style="left:418.8px;top:460.4px;height:14px;line-height:14px;font-size:9.2px;font-weight:400;color:#565c63;">10/17/23</div>
<div class="a t" style="right:756.4px;top:460.4px;height:14px;line-height:14px;font-size:9.2px;font-weight:400;color:#565c63;">500.00</div>
<div class="a t" style="left:587.8px;top:460.4px;height:14px;line-height:14px;font-size:9.2px;font-weight:400;color:#565c63;">CASSANDRA ROYAL ER1</div>
<div class="a t" style="left:990.8px;top:460.4px;height:14px;line-height:14px;font-size:9.2px;font-weight:400;color:#565c63;">1/12/24</div>
<div class="a t" style="right:222.4000000000001px;top:460.4px;height:14px;line-height:14px;font-size:9.2px;font-weight:400;color:#565c63;">0</div>
<div class="a t" style="left:1122.6px;top:460.4px;height:14px;line-height:14px;font-size:9.2px;font-weight:400;color:#565c63;">Required</div>
<div class="a t" style="left:1207.4px;top:460.4px;height:14px;line-height:14px;font-size:9.2px;font-weight:400;color:#565c63;">Not required</div>
<div class="a t" style="left:37.8px;top:485.6px;height:14px;line-height:14px;font-size:9.2px;font-weight:400;color:#2f7fb0;">5000ER000125453789</div>
<svg class="a" style="left:160.3px;top:480.6px" width="6" height="6" viewBox="0 0 6 6"><path d="M0 0H6L0 6Z" fill="#f09a5c"/></svg>
<div class="a t" style="left:167px;top:485.6px;height:14px;line-height:14px;font-size:9.2px;font-weight:400;color:#565c63;">VILSAINT, ERICA</div>
<div class="a t" style="left:249.5px;top:485.6px;height:14px;line-height:14px;font-size:9.2px;font-weight:400;color:#565c63;">5000 NC COM&hellip;</div>
<div class="a t" style="left:334.3px;top:485.6px;height:14px;line-height:14px;font-size:9.2px;font-weight:400;color:#565c63;">Ready for paym&hellip;</div>
<div class="a t" style="left:418.8px;top:485.6px;height:14px;line-height:14px;font-size:9.2px;font-weight:400;color:#565c63;">11/9/23</div>
<div class="a t" style="right:756.4px;top:485.6px;height:14px;line-height:14px;font-size:9.2px;font-weight:400;color:#565c63;">115.00</div>
<div class="a t" style="left:587.8px;top:485.6px;height:14px;line-height:14px;font-size:9.2px;font-weight:400;color:#565c63;">ERICA VILSAINT ER1</div>
<div class="a t" style="left:990.8px;top:485.6px;height:14px;line-height:14px;font-size:9.2px;font-weight:400;color:#565c63;">1/12/24</div>
<div class="a t" style="right:222.4000000000001px;top:485.6px;height:14px;line-height:14px;font-size:9.2px;font-weight:400;color:#565c63;">0</div>
<div class="a t" style="left:1122.6px;top:485.6px;height:14px;line-height:14px;font-size:9.2px;font-weight:400;color:#565c63;">Required</div>
<div class="a t" style="left:1207.4px;top:485.6px;height:14px;line-height:14px;font-size:9.2px;font-weight:400;color:#565c63;">Not required</div>
<div class="a t" style="left:37.8px;top:510.9px;height:14px;line-height:14px;font-size:9.2px;font-weight:400;color:#2f7fb0;">5000ER000125453797</div>
<svg class="a" style="left:160.3px;top:505.9px" width="6" height="6" viewBox="0 0 6 6"><path d="M0 0H6L0 6Z" fill="#f09a5c"/></svg>
<div class="a t" style="left:167px;top:510.9px;height:14px;line-height:14px;font-size:9.2px;font-weight:400;color:#565c63;">COOPER, ARB&hellip;</div>
<div class="a t" style="left:249.5px;top:510.9px;height:14px;line-height:14px;font-size:9.2px;font-weight:400;color:#565c63;">5000 NC COM&hellip;</div>
<div class="a t" style="left:334.3px;top:510.9px;height:14px;line-height:14px;font-size:9.2px;font-weight:400;color:#565c63;">Ready for paym&hellip;</div>
<div class="a t" style="left:418.8px;top:510.9px;height:14px;line-height:14px;font-size:9.2px;font-weight:400;color:#565c63;">11/1/23</div>
<div class="a t" style="right:756.4px;top:510.9px;height:14px;line-height:14px;font-size:9.2px;font-weight:400;color:#565c63;">100.00</div>
<div class="a t" style="left:587.8px;top:510.9px;height:14px;line-height:14px;font-size:9.2px;font-weight:400;color:#565c63;">ARBONY COOPER</div>
<div class="a t" style="left:990.8px;top:510.9px;height:14px;line-height:14px;font-size:9.2px;font-weight:400;color:#565c63;">1/12/24</div>
<div class="a t" style="right:222.4000000000001px;top:510.9px;height:14px;line-height:14px;font-size:9.2px;font-weight:400;color:#565c63;">0</div>
<div class="a t" style="left:1122.6px;top:510.9px;height:14px;line-height:14px;font-size:9.2px;font-weight:400;color:#565c63;">Required</div>
<div class="a t" style="left:1207.4px;top:510.9px;height:14px;line-height:14px;font-size:9.2px;font-weight:400;color:#565c63;">Not required</div>
<div class="a t" style="left:37.8px;top:536.1px;height:14px;line-height:14px;font-size:9.2px;font-weight:400;color:#2f7fb0;">5000ER000125453783</div>
<svg class="a" style="left:160.3px;top:531.1px" width="6" height="6" viewBox="0 0 6 6"><path d="M0 0H6L0 6Z" fill="#f09a5c"/></svg>
<div class="a t" style="left:167px;top:536.1px;height:14px;line-height:14px;font-size:9.2px;font-weight:400;color:#565c63;">FAGG, ALEXA&hellip;</div>
<div class="a t" style="left:249.5px;top:536.1px;height:14px;line-height:14px;font-size:9.2px;font-weight:400;color:#565c63;">5000 NC COM&hellip;</div>
<div class="a t" style="left:334.3px;top:536.1px;height:14px;line-height:14px;font-size:9.2px;font-weight:400;color:#565c63;">Ready for paym&hellip;</div>
<div class="a t" style="left:418.8px;top:536.1px;height:14px;line-height:14px;font-size:9.2px;font-weight:400;color:#565c63;">10/23/23</div>
<div class="a t" style="right:756.4px;top:536.1px;height:14px;line-height:14px;font-size:9.2px;font-weight:400;color:#565c63;">10.00</div>
<div class="a t" style="left:587.8px;top:536.1px;height:14px;line-height:14px;font-size:9.2px;font-weight:400;color:#565c63;">ALEXANDER FAGG ER1</div>
<div class="a t" style="left:990.8px;top:536.1px;height:14px;line-height:14px;font-size:9.2px;font-weight:400;color:#565c63;">1/12/24</div>
<div class="a t" style="right:222.4000000000001px;top:536.1px;height:14px;line-height:14px;font-size:9.2px;font-weight:400;color:#565c63;">0</div>
<div class="a t" style="left:1122.6px;top:536.1px;height:14px;line-height:14px;font-size:9.2px;font-weight:400;color:#565c63;">Required</div>
<div class="a t" style="left:1207.4px;top:536.1px;height:14px;line-height:14px;font-size:9.2px;font-weight:400;color:#565c63;">Not required</div>
<div class="a t" style="left:37.8px;top:561.1px;height:14px;line-height:14px;font-size:9.2px;font-weight:400;color:#2f7fb0;">5000ER000125534992</div>
<svg class="a" style="left:160.3px;top:556.4px" width="6" height="6" viewBox="0 0 6 6"><path d="M0 0H6L0 6Z" fill="#f09a5c"/></svg>
<div class="a t" style="left:167px;top:561.1px;height:14px;line-height:14px;font-size:9.2px;font-weight:400;color:#565c63;">BROWN, BARRY</div>
<div class="a t" style="left:249.5px;top:561.1px;height:14px;line-height:14px;font-size:9.2px;font-weight:400;color:#565c63;">5000 NC COM&hellip;</div>
<div class="a t" style="left:334.3px;top:561.1px;height:14px;line-height:14px;font-size:9.2px;font-weight:400;color:#565c63;">Ready for paym&hellip;</div>
<div class="a t" style="left:418.8px;top:561.1px;height:14px;line-height:14px;font-size:9.2px;font-weight:400;color:#565c63;">10/11/23</div>
<div class="a t" style="right:756.4px;top:561.1px;height:14px;line-height:14px;font-size:9.2px;font-weight:400;color:#565c63;">10.00</div>
<div class="a t" style="left:587.8px;top:561.1px;height:14px;line-height:14px;font-size:9.2px;font-weight:400;color:#565c63;">BARRY BROWN ER1</div>
<div class="a t" style="left:990.8px;top:561.1px;height:14px;line-height:14px;font-size:9.2px;font-weight:400;color:#565c63;">1/12/24</div>
<div class="a t" style="right:222.4000000000001px;top:561.1px;height:14px;line-height:14px;font-size:9.2px;font-weight:400;color:#565c63;">0</div>
<div class="a t" style="left:1122.6px;top:561.1px;height:14px;line-height:14px;font-size:9.2px;font-weight:400;color:#565c63;">Required</div>
<div class="a t" style="left:1207.4px;top:561.1px;height:14px;line-height:14px;font-size:9.2px;font-weight:400;color:#565c63;">Not required</div>
<div class="a t" style="left:37.8px;top:586.1px;height:14px;line-height:14px;font-size:9.2px;font-weight:400;color:#2f7fb0;">5000ER000125534963</div>
<svg class="a" style="left:160.3px;top:581.1px" width="6" height="6" viewBox="0 0 6 6"><path d="M0 0H6L0 6Z" fill="#f09a5c"/></svg>
<div class="a t" style="left:167px;top:586.1px;height:14px;line-height:14px;font-size:9.2px;font-weight:400;color:#565c63;">DORMAN, AN&hellip;</div>
<div class="a t" style="left:249.5px;top:586.1px;height:14px;line-height:14px;font-size:9.2px;font-weight:400;color:#565c63;">5000 NC COM&hellip;</div>
<div class="a t" style="left:334.3px;top:586.1px;height:14px;line-height:14px;font-size:9.2px;font-weight:400;color:#565c63;">Ready for paym&hellip;</div>
<div class="a t" style="left:418.8px;top:586.1px;height:14px;line-height:14px;font-size:9.2px;font-weight:400;color:#565c63;">1/12/24</div>
<div class="a t" style="right:756.4px;top:586.1px;height:14px;line-height:14px;font-size:9.2px;font-weight:400;color:#565c63;">100.00</div>
<div class="a t" style="left:587.8px;top:586.1px;height:14px;line-height:14px;font-size:9.2px;font-weight:400;color:#565c63;">ANGELA DORMAN ER1</div>
<div class="a t" style="left:990.8px;top:586.1px;height:14px;line-height:14px;font-size:9.2px;font-weight:400;color:#565c63;">1/12/24</div>
<div class="a t" style="right:222.4000000000001px;top:586.1px;height:14px;line-height:14px;font-size:9.2px;font-weight:400;color:#565c63;">0</div>
<div class="a t" style="left:1122.6px;top:586.1px;height:14px;line-height:14px;font-size:9.2px;font-weight:400;color:#565c63;">Required</div>
<div class="a t" style="left:1207.4px;top:586.1px;height:14px;line-height:14px;font-size:9.2px;font-weight:400;color:#565c63;">Not required</div>
<div class="a" style="left:160.5px;top:607.8px;width:1133.8px;height:7.6px;background:#f1f1f1"></div>
<div class="a" style="left:168.4px;top:607.8px;width:1006.6px;height:7.6px;background:#c1c1c1"></div>
<svg class="a" style="left:162.5px;top:609.6px" width="4" height="4" viewBox="0 0 4 4"><path d="M3 0.3L1 2l2 1.7z" fill="#8a8a8a"/></svg>
<svg class="a" style="left:1287.5px;top:609.6px" width="4" height="4" viewBox="0 0 4 4"><path d="M1 0.3L3 2l-2 1.7z" fill="#444"/></svg>
<div class="a" style="left:5px;top:551.2px;width:710.8px;height:30.9px;border:2.2px solid #dc1f2c"></div>
<svg class="a" style="left:325.5px;top:541px" width="11" height="16" viewBox="0 0 11 16"><path d="M1 1v11.5l2.8-2.6 2 4.6 1.8-.8-2-4.5H9.6z" fill="#fff" stroke="#777" stroke-width=".9"/></svg>
<div class="a t" style="left:22.5px;top:619.3px;height:14px;line-height:14px;font-size:9.2px;font-weight:700;color:#4a5058;">Rows Selected&nbsp; <span style="font-weight:400">1</span></div>
<div class="a t" style="left:111.5px;top:619.3px;height:14px;line-height:14px;font-size:9.2px;font-weight:700;color:#4a5058;">Columns Hidden&nbsp; <span style="font-weight:400">6</span></div>
<div class="a t" style="left:208.8px;top:619.3px;height:14px;line-height:14px;font-size:9.2px;font-weight:700;color:#4a5058;">Columns Frozen&nbsp; <span style="font-weight:400">1</span></div>
<div class="a" style="left:14.2px;top:641.9px;width:1280.8px;height:1.0px;background:#e6e8eb"></div>
<div class="a" style="left:6.3px;top:645px;width:40px;height:50px;overflow:hidden"><div class="a" style="left:-13.8px;top:10.9px;width:26px;height:26px;border:3px solid #4a50d8;border-radius:50%;background:#fff;box-shadow:0 2px 7px rgba(0,0,0,.28)"></div></div>
</div></body></html>
